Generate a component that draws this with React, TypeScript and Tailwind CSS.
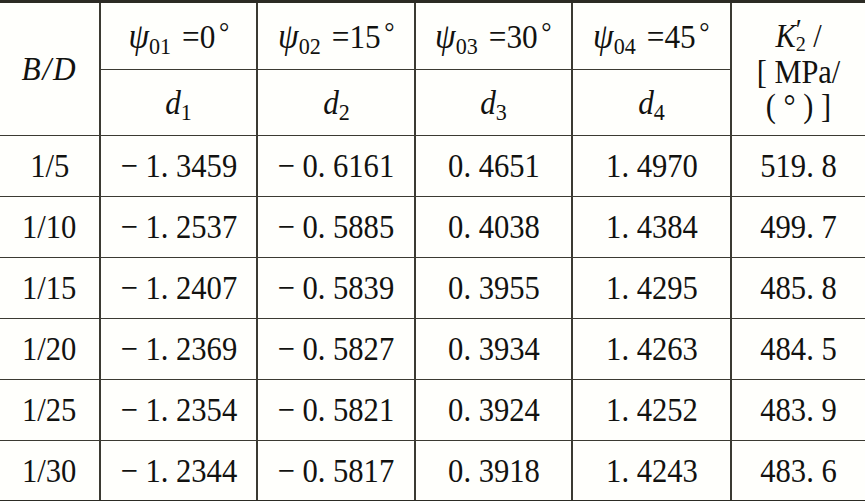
const rows: [string, string, string, string, string, string][] = [
  ['1/5', '\u2212 1. 3459', '\u2212 0. 6161', '0. 4651', '1. 4970', '519. 8'],
  ['1/10', '\u2212 1. 2537', '\u2212 0. 5885', '0. 4038', '1. 4384', '499. 7'],
  ['1/15', '\u2212 1. 2407', '\u2212 0. 5839', '0. 3955', '1. 4295', '485. 8'],
  ['1/20', '\u2212 1. 2369', '\u2212 0. 5827', '0. 3934', '1. 4263', '484. 5'],
  ['1/25', '\u2212 1. 2354', '\u2212 0. 5821', '0. 3924', '1. 4252', '483. 9'],
  ['1/30', '\u2212 1. 2344', '\u2212 0. 5817', '0. 3918', '1. 4243', '483. 6'],
];

const psi = [
  ['01', '0'],
  ['02', '15'],
  ['03', '30'],
  ['04', '45'],
];

function Psi({ sub, deg }: { sub: string; deg: string }) {
  return (
    <span className="inline-block scale-x-[0.92] whitespace-nowrap">
      <i className="text-[36px]">&psi;</i>
      <sub className="text-[24px] not-italic">{sub}</sub>
      <span className="ml-3">={deg}</span>
      <span className="relative -top-[7px] ml-1 text-[28px]">&deg;</span>
    </span>
  );
}

function D({ n }: { n: number }) {
  return (
    <span className="inline-block scale-x-[0.92]">
      <i>d</i>
      <sub className="text-[24px]">{n}</sub>
    </span>
  );
}

const cell = 'border-x-2 border-y-[1.5px] border-[#3b3a32] text-center align-middle p-0';

export default function App() {
  return (
    <div className="h-[501px] w-[865px] overflow-hidden bg-[#fffffc]">
      <table
        className="w-[865px] table-fixed border-collapse text-[34px] leading-none text-[#121210]"
        style={{ fontFamily: '"Liberation Serif", "Times New Roman", serif' }}
      >
        <colgroup>
          <col className="w-[100px]" />
          <col className="w-[157px]" />
          <col className="w-[158px]" />
          <col className="w-[157px]" />
          <col className="w-[159px]" />
          <col className="w-[134px]" />
        </colgroup>
        <thead>
          <tr className="h-[68px]">
            <th rowSpan={2} className={`${cell} border-l-0 border-t-[3px] border-t-[#2c2b24] font-normal italic`}>
              <span className="inline-block scale-x-[0.92] tracking-[2px]">B/D</span>
            </th>
            {psi.map(([s, d]) => (
              <th key={s} className={`${cell} border-t-[3px] border-t-[#2c2b24] font-normal`}>
                <Psi sub={s} deg={d} />
              </th>
            ))}
            <th rowSpan={2} className={`${cell} border-r-0 border-t-[3px] border-t-[#2c2b24] font-normal`}>
              <div className="flex scale-x-[0.92] flex-col items-center pt-1 text-[33px] leading-[34px]">
                <span className="flex items-start">
                  <i>K</i>
                  <span className="flex flex-col items-start leading-none">
                    <span className="h-[14px] text-[30px] leading-[20px]">&prime;</span>
                    <span className="text-[22px] leading-[22px]">2</span>
                  </span>
                  <span className="ml-2">/</span>
                </span>
                <span>[ MPa/</span>
                <span>(&nbsp;&deg;&nbsp;) ]</span>
              </div>
            </th>
          </tr>
          <tr className="h-[66px]">
            {[1, 2, 3, 4].map((n) => (
              <th key={n} className={`${cell} font-normal`}>
                <D n={n} />
              </th>
            ))}
          </tr>
        </thead>
        <tbody>
          {rows.map((r, i) => (
            <tr key={r[0]} className="h-[61px]">
              {r.map((v, j) => (
                <td
                  key={j}
                  className={`${cell} ${j === 0 ? 'border-l-0' : ''} ${j === 5 ? 'border-r-0' : ''} ${
                    i === rows.length - 1 ? 'border-b-[3px] border-b-[#2c2b24]' : ''
                  }`}
                >
                  <span className="inline-block scale-x-[0.9] whitespace-nowrap">{v}</span>
                </td>
              ))}
            </tr>
          ))}
        </tbody>
      </table>
    </div>
  );
}
